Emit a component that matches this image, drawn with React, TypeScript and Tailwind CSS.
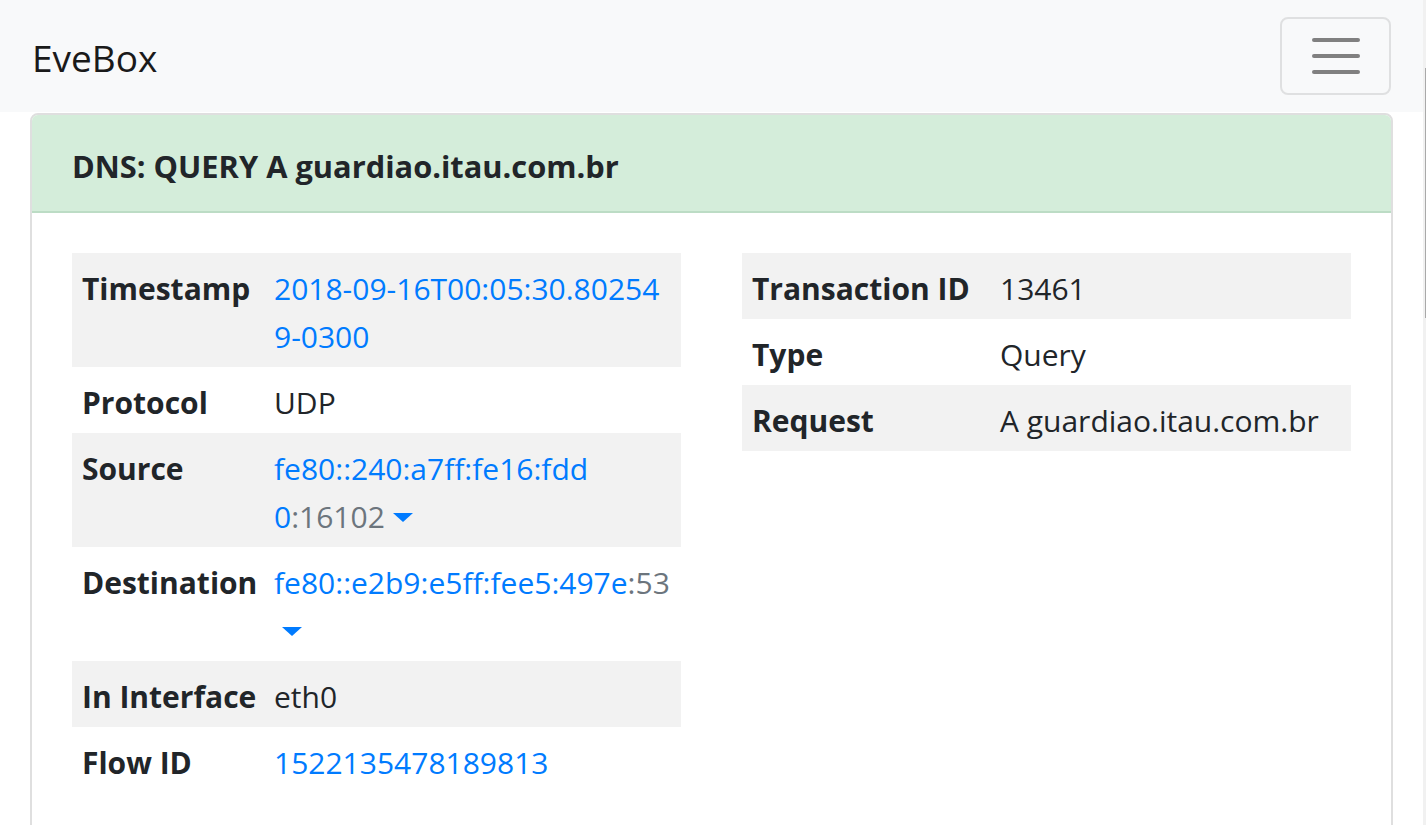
import React from "react";

const F = "font-['Open_Sans','Noto_Sans',sans-serif]";

function Caret() {
  return (
    <span className="inline-block ml-[8px] align-[0.2em] w-0 h-0 border-t-[9px] border-t-[#007bff] border-l-[10px] border-l-transparent border-r-[10px] border-r-transparent" />
  );
}

type Row = { label: string; value: React.ReactNode };

function KV({ rows, labelW }: { rows: Row[]; labelW: string }) {
  return (
    <div className="flex flex-col">
      {rows.map((r, i) => (
        <div key={r.label} className={`flex ${i % 2 === 0 ? "bg-[#f2f2f2]" : "bg-white"}`}>
          <div className={`${labelW} shrink-0 whitespace-nowrap px-[10px] pt-[12px] pb-[6px] font-bold leading-[48px] text-[#212529]`}>{r.label}</div>
          <div className="flex-1 min-w-0 px-[10px] pt-[12px] pb-[6px] leading-[48px] text-[#212529]">{r.value}</div>
        </div>
      ))}
    </div>
  );
}

export default function App() {
  const blue = "text-[#007bff]";
  const gray = "text-[#6c757d]";
  const left: Row[] = [
    {
      label: "Timestamp",
      value: (
        <span className={blue}>
          <span className="block whitespace-nowrap">2018-09-16T00:05:30.80254</span>
          <span className="block whitespace-nowrap">9-0300</span>
        </span>
      ),
    },
    { label: "Protocol", value: "UDP" },
    {
      label: "Source",
      value: (
        <>
          <span className={`block whitespace-nowrap ${blue}`}>fe80::240:a7ff:fe16:fdd</span>
          <span className="block whitespace-nowrap">
            <span className={blue}>0</span>
            <span className={gray}>:16102</span>
            <Caret />
          </span>
        </>
      ),
    },
    {
      label: "Destination",
      value: (
        <>
          <span className="block whitespace-nowrap">
            <span className={blue}>fe80::e2b9:e5ff:fee5:497e</span>
            <span className={gray}>:53</span>
          </span>
          <span className="block whitespace-nowrap">
            <Caret />
          </span>
        </>
      ),
    },
    { label: "In Interface", value: "eth0" },
    { label: "Flow ID", value: <span className={blue}>1522135478189813</span> },
  ];
  const right: Row[] = [
    { label: "Transaction ID", value: "13461" },
    { label: "Type", value: "Query" },
    { label: "Request", value: "A guardiao.itau.com.br" },
  ];

  return (
    <div className={`${F} flex h-screen w-full overflow-hidden bg-white text-[30px] text-[#212529]`}>
      <div className="flex-1 min-w-0 flex flex-col">
        <nav className="h-[112px] shrink-0 bg-[#f8f9fa] px-[32px] flex items-center justify-between">
          <span className="text-[37px] leading-[60px] pt-[3px] text-[#1a1a1a]">EveBox</span>
          <div className="w-[111px] h-[78px] border-[2px] border-[#dfe0e1] rounded-[8px] flex flex-col items-center justify-center gap-[12px]">
            <span className="block w-[48px] h-[4px] rounded-full bg-[#808080]" />
            <span className="block w-[48px] h-[4px] rounded-full bg-[#808080]" />
            <span className="block w-[48px] h-[4px] rounded-full bg-[#808080]" />
          </div>
        </nav>
        <div className="mx-[30px] mt-[1px] shrink-0 border-[2px] border-[#dfdfdf] rounded-[8px] overflow-hidden flex flex-col">
          <div className="bg-[#d4edda] border-b-[2px] border-[#bcdcc5] px-[40px] pt-[27px] pb-[21px]">
            <span className="font-bold text-[30.8px] leading-[48px] text-[#212529]">DNS: QUERY A guardiao.itau.com.br</span>
          </div>
          <div className="px-[40px] pt-[40px] pb-[40px] grid grid-cols-2 gap-x-[61px] items-start">
            <KV rows={left} labelW="w-[192px]" />
            <KV rows={right} labelW="w-[248px]" />
          </div>
        </div>
      </div>
      <div className="w-[3px] shrink-0 bg-[#f1f1f1] flex flex-col items-end">
        <div className="mt-[68px] h-[250px] w-[1px] bg-[#a9a9a9]" />
      </div>
    </div>
  );
}
